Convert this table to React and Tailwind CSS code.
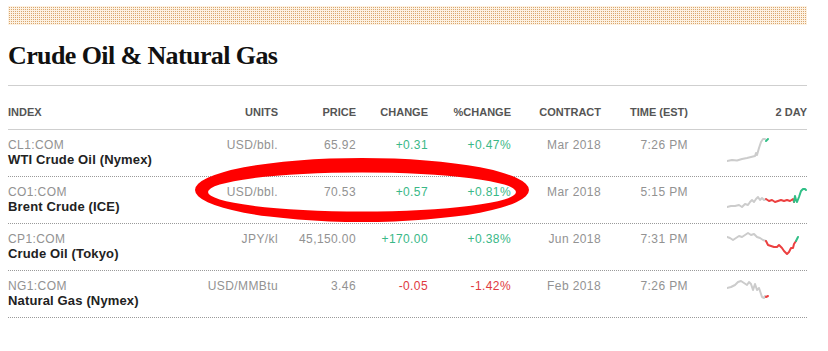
import React from "react";

const rows = [
  {
    code: "CL1:COM",
    name: "WTI Crude Oil (Nymex)",
    units: "USD/bbl.",
    price: "65.92",
    change: "+0.31",
    pct: "+0.47%",
    up: true,
    contract: "Mar 2018",
    time: "7:26 PM",
    spark: {
      gray: "0,25 5,24 10,24.5 15,23 20,22 24,21 28,20 29,17 30,19 32,12 34,6 36,3 38,3",
      red: "",
      green: "39,5 41,3",
    },
  },
  {
    code: "CO1:COM",
    name: "Brent Crude (ICE)",
    units: "USD/bbl.",
    price: "70.53",
    change: "+0.57",
    pct: "+0.81%",
    up: true,
    contract: "Mar 2018",
    time: "5:15 PM",
    spark: {
      gray: "0,24 4,23 8,23 12,22 15,24 18,21 21,22 23,19 25,17 27,19 29,16 31,14 33,17 35,15 37,17 39,16",
      red: "39,16 42,18 45,17 48,19 51,18 54,17 57,18 60,17 63,18 66,16 67,19",
      green: "67,19 68,13 69,17 70,19 72,14 74,8 76,6 78,6 79,7",
    },
  },
  {
    code: "CP1:COM",
    name: "Crude Oil (Tokyo)",
    units: "JPY/kl",
    price: "45,150.00",
    change: "+170.00",
    pct: "+0.38%",
    up: true,
    contract: "Jun 2018",
    time: "7:31 PM",
    spark: {
      gray: "0,7 3,8 6,10 9,8 12,6 15,7 18,5 21,3 24,5 27,4 30,7 33,8 36,10 39,11",
      red: "39,11 41,15 44,16 47,17 50,17 52,15 55,18 57,21 60,24 62,22 64,18 66,18 67,14 69,11",
      green: "69,11 71,7",
    },
  },
  {
    code: "NG1:COM",
    name: "Natural Gas (Nymex)",
    units: "USD/MMBtu",
    price: "3.46",
    change: "-0.05",
    pct: "-1.42%",
    up: false,
    contract: "Feb 2018",
    time: "7:26 PM",
    spark: {
      gray: "0,11 4,10 8,8 11,5 14,4 17,6 20,8 22,5 24,7 26,13 28,7 30,13 32,11 34,17 35,20 37,21 38,19",
      red: "39,20 41,19",
      green: "",
    },
  },
];

function Spark({ s }) {
  return (
    <svg width="80" height="30" viewBox="0 0 80 30" className="block">
      <polyline points={s.gray} fill="none" stroke="#cccccc" strokeWidth="2" strokeLinejoin="round" strokeLinecap="round" />
      {s.red && (
        <polyline points={s.red} fill="none" stroke="#ec4040" strokeWidth="2" strokeLinejoin="round" strokeLinecap="round" />
      )}
      {s.green && (
        <polyline points={s.green} fill="none" stroke="#2fbf86" strokeWidth="2" strokeLinejoin="round" strokeLinecap="round" />
      )}
    </svg>
  );
}

const gridCols =
  "grid grid-cols-[192px_78px_78px_72px_83px_90px_87px_119px]";

export default function App() {
  return (
    <div className="relative w-[828px] h-[351px] bg-white overflow-hidden font-['Liberation_Sans',Arial,sans-serif]">
      <div className="ml-2 w-[799px]">
        <div className="mt-[6px] h-[19px] bg-[#d9a66e] bg-[linear-gradient(90deg,#fdf2e3_1px,transparent_1px),linear-gradient(#fdf2e3_1px,transparent_1px)] bg-[size:2px_2px]" />
        <h1 className="mt-[15px] mb-[13px] h-[32px] leading-[32px] text-[26px] font-bold tracking-[-0.6px] text-[#111] font-['Liberation_Serif','Times_New_Roman',serif]">
          Crude Oil &amp; Natural Gas
        </h1>
        <div className={`${gridCols} border-t border-b border-[#cfcfcf] pt-5 pb-[10px] text-[11px] leading-[13px] font-bold text-[#555]`}>
          <div>INDEX</div>
          <div className="text-right">UNITS</div>
          <div className="text-right">PRICE</div>
          <div className="text-right">CHANGE</div>
          <div className="text-right">%CHANGE</div>
          <div className="text-right">CONTRACT</div>
          <div className="text-right">TIME (EST)</div>
          <div className="text-right">2 DAY</div>
        </div>
        {rows.map((r) => (
          <div
            key={r.code}
            className={`${gridCols} border-b border-dotted border-[#9a9a9a] pt-2 pb-[9px] text-[12px] leading-[14px] tracking-[0.4px] text-[#929292]`}
          >
            <div>
              <div>{r.code}</div>
              <div className="text-[13px] leading-[15px] font-bold tracking-[0.15px] text-[#222]">{r.name}</div>
            </div>
            <div className="text-right">{r.units}</div>
            <div className="text-right">{r.price}</div>
            <div className={`text-right ${r.up ? "text-[#3ab887]" : "text-[#e0393e]"}`}>{r.change}</div>
            <div className={`text-right ${r.up ? "text-[#3ab887]" : "text-[#e0393e]"}`}>{r.pct}</div>
            <div className="text-right">{r.contract}</div>
            <div className="text-right">{r.time}</div>
            <div className="flex justify-end -mt-[2px]">
              <Spark s={r.spark} />
            </div>
          </div>
        ))}
      </div>
      <svg
        className="absolute left-0 top-0 pointer-events-none"
        width="828"
        height="351"
        viewBox="0 0 828 351"
      >
        <path
          fillRule="evenodd"
          fill="#ff0000"
          d="M195,190 a167,32 0 1,0 334,0 a167,32 0 1,0 -334,0 Z M208,192 a154,19.5 0 1,0 308,0 a154,19.5 0 1,0 -308,0 Z"
        />
      </svg>
    </div>
  );
}
